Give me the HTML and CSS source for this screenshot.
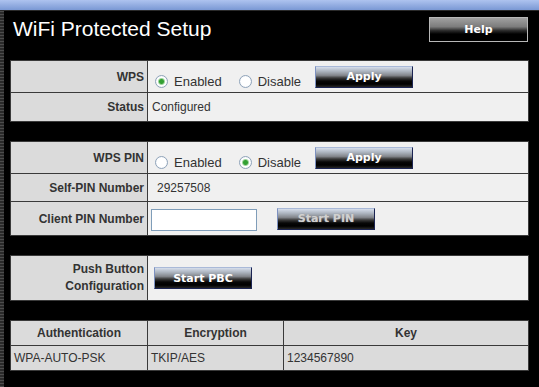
FILE: index.html
```html
<!DOCTYPE html>
<html lang="en">
<head>
    <meta charset="UTF-8">
    <meta name="viewport" content="width=device-width, initial-scale=1.0">
    <title>WiFi Protected Setup</title>
    <link rel="stylesheet" href="styles.css">
</head>
<body>
    <div class="topbar"></div>
    <div class="frame">
        <div class="edge"></div>
        <div class="main">
            <div class="head">
                <h1>WiFi Protected Setup</h1>
                <button class="btn help">Help</button>
            </div>

            <table class="box">
                <tr>
                    <th>WPS</th>
                    <td>
                        <div class="opts">
                            <label class="opt"><input type="radio" name="wps" checked> Enabled</label>
                            <label class="opt"><input type="radio" name="wps"> Disable</label>
                            <button class="btn">Apply</button>
                        </div>
                    </td>
                </tr>
                <tr class="short first">
                    <th>Status</th>
                    <td>Configured</td>
                </tr>
            </table>

            <table class="box">
                <tr>
                    <th>WPS PIN</th>
                    <td>
                        <div class="opts">
                            <label class="opt"><input type="radio" name="pin"> Enabled</label>
                            <label class="opt"><input type="radio" name="pin" checked> Disable</label>
                            <button class="btn">Apply</button>
                        </div>
                    </td>
                </tr>
                <tr class="short">
                    <th>Self-PIN Number</th>
                    <td class="pin">29257508</td>
                </tr>
                <tr>
                    <th>Client PIN Number</th>
                    <td>
                        <div class="opts client">
                            <input type="text" class="pin-input">
                            <button class="btn dim">Start PIN</button>
                        </div>
                    </td>
                </tr>
            </table>

            <table class="box">
                <tr class="tall">
                    <th>Push Button<br>Configuration</th>
                    <td><button class="btn pbc">Start PBC</button></td>
                </tr>
            </table>

            <table class="box list">
                <colgroup>
                    <col class="c1">
                    <col class="c2">
                    <col class="c3">
                </colgroup>
                <tr>
                    <th>Authentication</th>
                    <th>Encryption</th>
                    <th>Key</th>
                </tr>
                <tr>
                    <td>WPA-AUTO-PSK</td>
                    <td>TKIP/AES</td>
                    <td>1234567890</td>
                </tr>
            </table>
        </div>
    </div>
</body>
</html>
```

FILE: styles.css
```css
body {
    margin: 0;
    background: #000;
    font-family: "Liberation Sans", Arial, sans-serif;
    font-size: 12px;
    color: #333;
}
.topbar {
    height: 10px;
    background: linear-gradient(#aec3ef, #7a98d4);
    border-bottom: 1px solid #2a2a2a;
}
.frame {
    display: flex;
    min-height: calc(100vh - 11px);
}
.edge {
    width: 4px;
    background: repeating-linear-gradient(#4c4c4c 0 1px, #2a2a2a 1px 3px);
}
.main {
    flex: 1;
    padding: 6px 10px 0 6px;
}
.head {
    display: flex;
    justify-content: space-between;
    align-items: flex-start;
    height: 24px;
    margin-bottom: 19px;
}
h1 {
    margin: 0 0 0 3px;
    font-size: 21px;
    font-weight: normal;
    line-height: 24px;
    color: #fff;
}

/* tables */
.box {
    width: 519px;
    border-collapse: collapse;
    table-layout: fixed;
    margin-bottom: 19px;
}
.box th,
.box td {
    border: 1px solid #3a3a3a;
    padding: 0 4px;
    height: 31px;
}
.box th {
    width: 129px;
    padding: 0 3px 0 4px;
    text-align: right;
    font-weight: bold;
    background: #dbdbdb;
    color: #333;
}
.box td {
    background: #f0f0f0;
}
.box tr.short th,
.box tr.short td {
    height: 27px;
}
.box tr.first th,
.box tr.first td {
    height: 28px;
}
.box tr.tall th,
.box tr.tall td {
    height: 44px;
    line-height: 17px;
}
.pin {
    padding-left: 9px !important;
}

.opts {
    display: flex;
    align-items: center;
    height: 31px;
}
.opt {
    display: flex;
    align-items: center;
    gap: 6px;
    margin: 10px 0 0 3px;
    font-size: 13px;
    color: #333;
}
.opt + .opt {
    margin-left: 17px;
}
.opt + .btn,
.opt + .opt + .btn {
    margin-left: 14px;
}
input[type="radio"] {
    appearance: none;
    width: 13px;
    height: 13px;
    margin: 0;
    border: 1px solid #8fa3b9;
    border-radius: 50%;
    background: radial-gradient(circle, #fff 0 55%, #e2e7ee 100%);
}
input[type="radio"]:checked {
    background: radial-gradient(circle, #33a033 0 2px, #9fd49f 3px, #fff 4px, #fff 55%, #e2e7ee 100%);
}
.client {
    height: 33px;
}
.pin-input {
    width: 106px;
    height: 22px;
    box-sizing: border-box;
    margin: 3px 0 0 -1px;
    border: 1px solid #7f9db9;
    background: #fff;
}
.client .btn {
    margin-left: 20px;
}

/* buttons */
.btn {
    width: 98px;
    height: 22px;
    padding: 0;
    border: 1px solid;
    border-color: #a9b9d8 #1b2452 #1b2452 #7d91c0;
    background: linear-gradient(#d6deec, #abb3be 22%, #83868c 42%, #3a3a3a 55%, #080808 70%, #000 85%, #262626);
    color: #fff;
    font: bold 11px "DejaVu Sans", Verdana, sans-serif;
    cursor: pointer;
}
.btn.dim {
    color: #d0d0d0;
    text-shadow: 0 0 1px #999;
}
.btn.pbc {
    margin-left: 2px;
}
.help {
    width: 99px;
    height: 25px;
    margin-right: 1px;
    border-color: #b8b8b8;
    background: linear-gradient(#a0a0a0, #7c7c7c 38%, #2a2a2a 55%, #000 70%);
}

/* auth list */
.list .c1 { width: 137px; }
.list .c2 { width: 136px; }
.list th,
.list td {
    height: 24px;
    background: #dbdbdb;
}
.list th {
    width: auto;
    padding: 0 4px;
    text-align: center;
}
.list td {
    padding: 0 3px;
}
```
